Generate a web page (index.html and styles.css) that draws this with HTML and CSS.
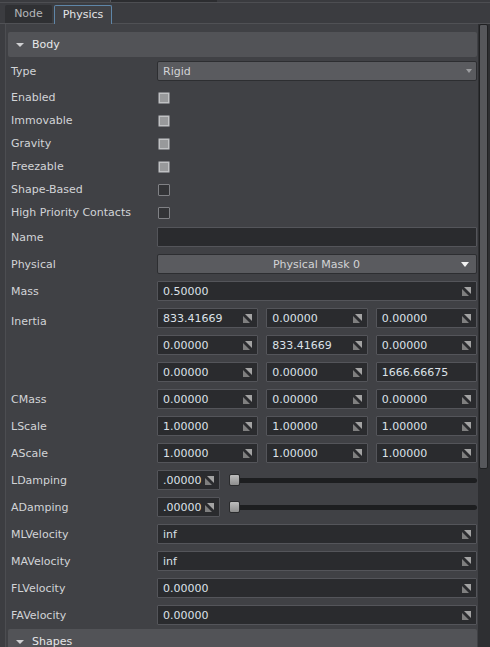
FILE: index.html
```html
<!DOCTYPE html>
<html>
<head>
<meta charset="utf-8">
<title>Physics</title>
<link rel="stylesheet" href="styles.css">
</head>
<body>
<div class="app">
  <div class="topstrip"><div class="topblock"></div></div>
  <div class="tabbar">
    <div class="tab tab-node">Node</div>
    <div class="tab tab-physics">Physics</div>
  </div>
  <div class="main">
    <div class="content">
      <div class="section-header"><span class="caret"></span><span>Body</span></div>

      <div class="row row-type">
        <div class="label">Type</div>
        <div class="value">
          <div class="combo"><span class="combo-text">Rigid</span><span class="combo-arrow"></span></div>
        </div>
      </div>

      <div class="checks">
        <div class="row row-check"><div class="label">Enabled</div><div class="value"><span class="check on"></span></div></div>
        <div class="row row-check"><div class="label">Immovable</div><div class="value"><span class="check on"></span></div></div>
        <div class="row row-check"><div class="label">Gravity</div><div class="value"><span class="check on"></span></div></div>
        <div class="row row-check"><div class="label">Freezable</div><div class="value"><span class="check on"></span></div></div>
        <div class="row row-check"><div class="label">Shape-Based</div><div class="value"><span class="check"></span></div></div>
        <div class="row row-check"><div class="label">High Priority Contacts</div><div class="value"><span class="check"></span></div></div>
      </div>

      <div class="fields">
        <div class="row row-field"><div class="label">Name</div><div class="value"><div class="field"></div></div></div>

        <div class="row row-field">
          <div class="label">Physical</div>
          <div class="value">
            <div class="combo combo-center"><span class="combo-text">Physical Mask 0</span><span class="combo-arrow white"></span></div>
          </div>
        </div>

        <div class="row row-field"><div class="label">Mass</div><div class="value"><div class="field"><span class="num">0.50000</span><svg class="spin" viewBox="0 0 9 9" width="9" height="9"><polygon points="2,0 9,0 9,7" fill="#a3a3a3"/><polygon points="0,2 0,9 7,9" fill="#7f7f7f"/></svg></div></div></div>

        <div class="row row-field row-matrix">
          <div class="label label-inertia">Inertia</div>
          <div class="value">
            <div class="grid3">
              <div class="field"><span class="num">833.41669</span><svg class="spin" viewBox="0 0 9 9" width="9" height="9"><polygon points="2,0 9,0 9,7" fill="#a3a3a3"/><polygon points="0,2 0,9 7,9" fill="#7f7f7f"/></svg></div>
              <div class="field"><span class="num">0.00000</span><svg class="spin" viewBox="0 0 9 9" width="9" height="9"><polygon points="2,0 9,0 9,7" fill="#a3a3a3"/><polygon points="0,2 0,9 7,9" fill="#7f7f7f"/></svg></div>
              <div class="field"><span class="num">0.00000</span><svg class="spin" viewBox="0 0 9 9" width="9" height="9"><polygon points="2,0 9,0 9,7" fill="#a3a3a3"/><polygon points="0,2 0,9 7,9" fill="#7f7f7f"/></svg></div>
              <div class="field"><span class="num">0.00000</span><svg class="spin" viewBox="0 0 9 9" width="9" height="9"><polygon points="2,0 9,0 9,7" fill="#a3a3a3"/><polygon points="0,2 0,9 7,9" fill="#7f7f7f"/></svg></div>
              <div class="field"><span class="num">833.41669</span><svg class="spin" viewBox="0 0 9 9" width="9" height="9"><polygon points="2,0 9,0 9,7" fill="#a3a3a3"/><polygon points="0,2 0,9 7,9" fill="#7f7f7f"/></svg></div>
              <div class="field"><span class="num">0.00000</span><svg class="spin" viewBox="0 0 9 9" width="9" height="9"><polygon points="2,0 9,0 9,7" fill="#a3a3a3"/><polygon points="0,2 0,9 7,9" fill="#7f7f7f"/></svg></div>
              <div class="field"><span class="num">0.00000</span><svg class="spin" viewBox="0 0 9 9" width="9" height="9"><polygon points="2,0 9,0 9,7" fill="#a3a3a3"/><polygon points="0,2 0,9 7,9" fill="#7f7f7f"/></svg></div>
              <div class="field"><span class="num">0.00000</span><svg class="spin" viewBox="0 0 9 9" width="9" height="9"><polygon points="2,0 9,0 9,7" fill="#a3a3a3"/><polygon points="0,2 0,9 7,9" fill="#7f7f7f"/></svg></div>
              <div class="field"><span class="num">1666.66675</span></div>
            </div>
          </div>
        </div>

        <div class="row row-field">
          <div class="label">CMass</div>
          <div class="value"><div class="grid3">
            <div class="field"><span class="num">0.00000</span><svg class="spin" viewBox="0 0 9 9" width="9" height="9"><polygon points="2,0 9,0 9,7" fill="#a3a3a3"/><polygon points="0,2 0,9 7,9" fill="#7f7f7f"/></svg></div>
            <div class="field"><span class="num">0.00000</span><svg class="spin" viewBox="0 0 9 9" width="9" height="9"><polygon points="2,0 9,0 9,7" fill="#a3a3a3"/><polygon points="0,2 0,9 7,9" fill="#7f7f7f"/></svg></div>
            <div class="field"><span class="num">0.00000</span><svg class="spin" viewBox="0 0 9 9" width="9" height="9"><polygon points="2,0 9,0 9,7" fill="#a3a3a3"/><polygon points="0,2 0,9 7,9" fill="#7f7f7f"/></svg></div>
          </div></div>
        </div>

        <div class="row row-field">
          <div class="label">LScale</div>
          <div class="value"><div class="grid3">
            <div class="field"><span class="num">1.00000</span><svg class="spin" viewBox="0 0 9 9" width="9" height="9"><polygon points="2,0 9,0 9,7" fill="#a3a3a3"/><polygon points="0,2 0,9 7,9" fill="#7f7f7f"/></svg></div>
            <div class="field"><span class="num">1.00000</span><svg class="spin" viewBox="0 0 9 9" width="9" height="9"><polygon points="2,0 9,0 9,7" fill="#a3a3a3"/><polygon points="0,2 0,9 7,9" fill="#7f7f7f"/></svg></div>
            <div class="field"><span class="num">1.00000</span><svg class="spin" viewBox="0 0 9 9" width="9" height="9"><polygon points="2,0 9,0 9,7" fill="#a3a3a3"/><polygon points="0,2 0,9 7,9" fill="#7f7f7f"/></svg></div>
          </div></div>
        </div>

        <div class="row row-field">
          <div class="label">AScale</div>
          <div class="value"><div class="grid3">
            <div class="field"><span class="num">1.00000</span><svg class="spin" viewBox="0 0 9 9" width="9" height="9"><polygon points="2,0 9,0 9,7" fill="#a3a3a3"/><polygon points="0,2 0,9 7,9" fill="#7f7f7f"/></svg></div>
            <div class="field"><span class="num">1.00000</span><svg class="spin" viewBox="0 0 9 9" width="9" height="9"><polygon points="2,0 9,0 9,7" fill="#a3a3a3"/><polygon points="0,2 0,9 7,9" fill="#7f7f7f"/></svg></div>
            <div class="field"><span class="num">1.00000</span><svg class="spin" viewBox="0 0 9 9" width="9" height="9"><polygon points="2,0 9,0 9,7" fill="#a3a3a3"/><polygon points="0,2 0,9 7,9" fill="#7f7f7f"/></svg></div>
          </div></div>
        </div>

        <div class="row row-field">
          <div class="label">LDamping</div>
          <div class="value value-slider">
            <div class="field field-small"><span class="num">.00000</span><svg class="spin" viewBox="0 0 9 9" width="9" height="9"><polygon points="2,0 9,0 9,7" fill="#a3a3a3"/><polygon points="0,2 0,9 7,9" fill="#7f7f7f"/></svg></div>
            <div class="slider"><div class="track"></div><div class="handle"></div></div>
          </div>
        </div>

        <div class="row row-field">
          <div class="label">ADamping</div>
          <div class="value value-slider">
            <div class="field field-small"><span class="num">.00000</span><svg class="spin" viewBox="0 0 9 9" width="9" height="9"><polygon points="2,0 9,0 9,7" fill="#a3a3a3"/><polygon points="0,2 0,9 7,9" fill="#7f7f7f"/></svg></div>
            <div class="slider"><div class="track"></div><div class="handle"></div></div>
          </div>
        </div>

        <div class="row row-field"><div class="label">MLVelocity</div><div class="value"><div class="field"><span class="num">inf</span><svg class="spin" viewBox="0 0 9 9" width="9" height="9"><polygon points="2,0 9,0 9,7" fill="#a3a3a3"/><polygon points="0,2 0,9 7,9" fill="#7f7f7f"/></svg></div></div></div>
        <div class="row row-field"><div class="label">MAVelocity</div><div class="value"><div class="field"><span class="num">inf</span><svg class="spin" viewBox="0 0 9 9" width="9" height="9"><polygon points="2,0 9,0 9,7" fill="#a3a3a3"/><polygon points="0,2 0,9 7,9" fill="#7f7f7f"/></svg></div></div></div>
        <div class="row row-field"><div class="label">FLVelocity</div><div class="value"><div class="field"><span class="num">0.00000</span><svg class="spin" viewBox="0 0 9 9" width="9" height="9"><polygon points="2,0 9,0 9,7" fill="#a3a3a3"/><polygon points="0,2 0,9 7,9" fill="#7f7f7f"/></svg></div></div></div>
        <div class="row row-field"><div class="label">FAVelocity</div><div class="value"><div class="field"><span class="num">0.00000</span><svg class="spin" viewBox="0 0 9 9" width="9" height="9"><polygon points="2,0 9,0 9,7" fill="#a3a3a3"/><polygon points="0,2 0,9 7,9" fill="#7f7f7f"/></svg></div></div></div>
      </div>

      <div class="section-header section-shapes"><span class="caret"></span><span>Shapes</span></div>
    </div>
    <div class="scrollbar"><div class="thumb"></div></div>
  </div>
</div>
</body>
</html>
```

FILE: styles.css
```css
* { box-sizing: border-box; }
html, body { margin: 0; padding: 0; }
body {
  width: 490px;
  height: 647px;
  overflow: hidden;
  background: #3c3d41;
  font-family: "DejaVu Sans", "Liberation Sans", sans-serif;
  font-size: 11px;
  color: #d2d4d7;
}
.app { display: flex; flex-direction: column; height: 647px; }

.topstrip {
  height: 3px;
  display: flex;
  background: #3a3b3f;
  border-bottom: 1px solid #4d4e52;
}
.topblock {
  margin-left: 110px;
  width: 107px;
  background: #2c2d30;
  border-left: 1px solid #55565a;
}

.tabbar {
  height: 21px;
  display: flex;
  align-items: flex-end;
  gap: 2px;
  padding-left: 5px;
  background: #3b3c40;
  border-bottom: 1px solid #505155;
}
.tab {
  height: 18px;
  line-height: 18px;
  text-align: center;
  border-radius: 2px 2px 0 0;
}
.tab-node {
  width: 47px;
  background: #2f3033;
  color: #b3b5b8;
}
.tab-physics {
  width: 58px;
  height: 19px;
  margin-bottom: -1px;
  line-height: 17px;
  background: #404145;
  color: #e4e5e7;
  border: 1px solid #5f86a8;
  border-bottom: none;
}

.main { flex: 1; display: flex; padding-left: 5px; min-height: 0; }
.content {
  flex: 1;
  background: #404145;
  border-left: 1px solid #4c4d51;
  padding-top: 8px;
  overflow: hidden;
}
.scrollbar {
  width: 12px;
  background: #2e2f32;
  padding: 0 2px 0 1px;
}
.thumb {
  height: 445px;
  background: #56575b;
  border: 1px solid #1f2022;
  border-radius: 2px;
}

.section-header {
  height: 25px;
  margin: 0 1px 0 2px;
  background: #525357;
  border-radius: 2px;
  display: flex;
  align-items: center;
  padding-left: 8px;
  color: #e6e7e9;
}
.caret {
  width: 0;
  height: 0;
  border-left: 4px solid transparent;
  border-right: 4px solid transparent;
  border-top: 4px solid #cfd0d2;
  margin-right: 8px;
}
.section-shapes { margin-top: 4px; }

.row {
  display: flex;
  padding: 0 1px 0 5px;
}
.label {
  width: 146px;
  flex: none;
  white-space: nowrap;
  display: flex;
  align-items: center;
}
.value { flex: 1; display: flex; align-items: center; min-width: 0; }

.row-type { height: 20px; margin-top: 4px; }
.checks { margin-top: 5px; }
.row-check { height: 23px; }
.fields { margin-top: 3px; display: flex; flex-direction: column; gap: 7px; }
.row-field { min-height: 20px; }

.row-matrix .label-inertia {
  align-items: flex-start;
  padding-top: 4px;
  line-height: 20px;
}

.combo {
  height: 20px;
  width: 100%;
  background: #5a5b5f;
  border: 1px solid #2d2e31;
  border-radius: 2px;
  display: flex;
  align-items: center;
  padding: 0 4px 0 5px;
  color: #d3d4d6;
}
.combo-text { flex: 1; }
.combo-arrow {
  width: 0;
  height: 0;
  border-left: 3.5px solid transparent;
  border-right: 3.5px solid transparent;
  border-top: 4px solid #9c9da0;
}
.combo-center { padding-right: 7px; }
.combo-center .combo-text { text-align: center; padding-left: 9px; }
.combo-arrow.white {
  border-left-width: 4.5px;
  border-right-width: 4.5px;
  border-top: 5px solid #f2f2f2;
}

.check {
  width: 12px;
  height: 12px;
  margin-left: 1px;
  border: 1px solid #808185;
  background: #333437;
  border-radius: 1px;
  display: flex;
  align-items: center;
  justify-content: center;
}
.check.on::after {
  content: "";
  width: 8px;
  height: 8px;
  background: #98999b;
  border: 1px solid #c0c1c3;
}

.field {
  height: 20px;
  width: 100%;
  background: #2a2b2e;
  border: 1px solid #54555a;
  border-radius: 1px;
  display: flex;
  align-items: center;
  padding: 0 5px;
  color: #dce1e8;
  white-space: nowrap;
  overflow: hidden;
}
.num { flex: 1; }
.spin { flex: none; display: block; }

.grid3 {
  width: 100%;
  display: grid;
  grid-template-columns: 1fr 1fr 1fr;
  column-gap: 8px;
  row-gap: 7px;
}

.value-slider { gap: 9px; }
.field-small { width: 63px; flex: none; }
.slider {
  flex: 1;
  height: 20px;
  position: relative;
  display: flex;
  align-items: center;
}
.track {
  flex: 1;
  height: 5px;
  margin-left: 4px;
  background: #1d1e20;
  border-radius: 3px;
}
.handle {
  position: absolute;
  left: 0;
  top: 4px;
  width: 11px;
  height: 12px;
  border: 1px solid #2a2b2d;
  border-radius: 2px;
  background: linear-gradient(#bdbdbd, #8e8e8e);
}
```
